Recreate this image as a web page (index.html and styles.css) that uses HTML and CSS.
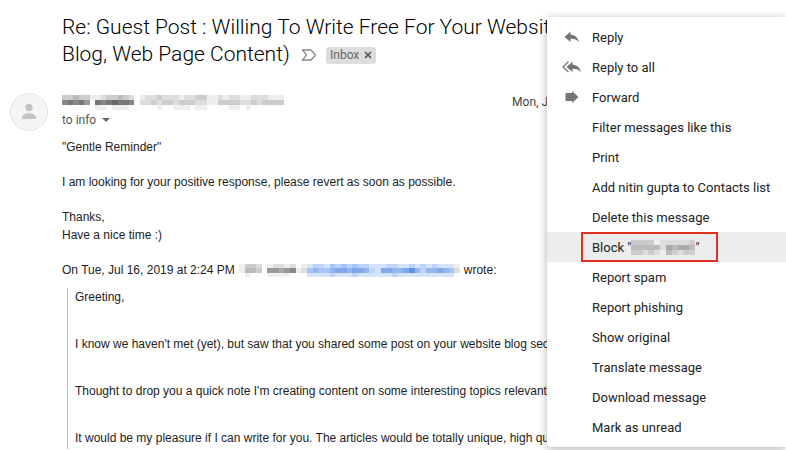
FILE: index.html
```
<!DOCTYPE html>
<html lang="en">
	<head>
		<meta charset="UTF-8">
		<title>Mail</title>
		<link rel="stylesheet" href="styles.css">
	</head>
	<body>
		<div class="mail">
			<div class="subject">
				<h1>Re: Guest Post : Willing To Write Free For Your Website<br>Blog, Web Page Content)</h1>
				<button class="important" type="button" aria-label="Important">
					<svg width="16" height="12" viewBox="0 0 16 12"><path d="M1.500 1H10l4.500 5-4.500 5H1.500l4-5z" fill="none" stroke="#8a8a8a" stroke-width="1.300"/></svg>
				</button>
				<button class="label" type="button">Inbox
					<svg width="8" height="8" viewBox="0 0 8 8"><path d="M1 1l6 6M7 1L1 7" stroke="#555" stroke-width="1.700"/></svg>
				</button>
			</div>
			<div class="message">
				<div class="avatar">
					<svg width="38" height="38" viewBox="0 0 38 38"><circle cx="19" cy="19" r="18.500" fill="#f5f5f5" stroke="#e2e2e2"/><circle cx="19" cy="14.500" r="3.700" fill="#c4c4c4"/><path d="M12 26v-1.800c0-2.500 4.500-3.900 7-3.900s7 1.400 7 3.900V26z" fill="#c4c4c4"/></svg>
				</div>
				<div class="content">
					<div class="from">
						<svg class="mosaic" data-mosaic="sender" width="228" height="15"></svg>
						<span class="date">Mon, J</span>
					</div>
					<button class="to" type="button">to info
						<svg width="8" height="4" viewBox="0 0 8 4"><path d="M0 0h8L4 4z" fill="#666"/></svg>
					</button>
					<div class="text">
						<p>"Gentle Reminder"</p>
						<p>I am looking for your positive response, please revert as soon as possible.</p>
						<p>Thanks,<br>Have a nice time :)</p>
						<p class="wrote">On Tue, Jul 16, 2019 at 2:24 PM <svg class="mosaic" data-mosaic="quoted" width="221" height="13"></svg> wrote:</p>
					</div>
					<blockquote>
						<p>Greeting,</p>
						<p>I know we haven't met (yet), but saw that you shared some post on your website blog section</p>
						<p>Thought to drop you a quick note I'm creating content on some interesting topics relevant</p>
						<p>It would be my pleasure if I can write for you. The articles would be totally unique, high qua</p>
					</blockquote>
				</div>
			</div>
		</div>
		<div class="menu">
			<button type="button"><span class="icon"><svg width="16" height="12" viewBox="0 0 16 12"><path d="M6.500 3.500V.500L.500 6l6 5V7.800c4 0 6.500 1 8.500 3.700-.700-4-3-7.300-8.500-8z" fill="#757575"/></svg></span>Reply</button>
			<button type="button"><span class="icon"><svg width="20" height="12" viewBox="0 0 20 12"><path d="M6.500.500L1 6l5.500 5" fill="none" stroke="#757575" stroke-width="1.300"/><path d="M10.500 3.500V.500L4.500 6l6 5V7.800c4 0 6.500 1 8.500 3.700-.700-4-3-7.300-8.500-8z" fill="#757575"/></svg></span>Reply to all</button>
			<button type="button"><span class="icon"><svg width="14" height="12" viewBox="0 0 14 12"><path d="M.500 2H7V0l6.500 6L7 12v-2H.500z" fill="#757575"/></svg></span>Forward</button>
			<button type="button"><span class="icon"></span>Filter messages like this</button>
			<button type="button"><span class="icon"></span>Print</button>
			<button type="button"><span class="icon"></span>Add nitin gupta to Contacts list</button>
			<button type="button"><span class="icon"></span>Delete this message</button>
			<button type="button" class="active"><span class="marked">Block "<svg class="mosaic" data-mosaic="blocked" width="64" height="15"></svg>"</span></button>
			<button type="button"><span class="icon"></span>Report spam</button>
			<button type="button"><span class="icon"></span>Report phishing</button>
			<button type="button"><span class="icon"></span>Show original</button>
			<button type="button"><span class="icon"></span>Translate message</button>
			<button type="button"><span class="icon"></span>Download message</button>
			<button type="button"><span class="icon"></span>Mark as unread</button>
		</div>
		<script src="mosaic.js"></script>
	</body>
</html>
```
FILE: styles.css
```
*{
	margin: 0;
	padding: 0;
	box-sizing: border-box;
}
body{
	background-color: #fff;
	color: #222;
	font-family: "Liberation Sans", Arial, sans-serif;
	font-size: 12px;
	line-height: 18px;
	overflow: hidden;
}
button{
	border: 0;
	background: none;
	color: #222;
	font-family: Roboto, sans-serif;
	text-align: left;
	cursor: pointer;
}
.mail{
	padding: 14px 10px 0;
}
/*标题*/
.subject{
	padding-left: 52px;
	color: #000;
	font-family: Roboto, sans-serif;
	font-size: 21px;
	font-weight: 300;
	line-height: 27px;
	white-space: nowrap;
}
.subject h1{
	display: inline;
	font-size: 21px;
	font-weight: 300;
}
.important{
	height: 16px;
	margin: 0 4px 0 6px;
	vertical-align: middle;
}
.important svg{
	display: block;
}
.label{
	display: inline-flex;
	align-items: center;
	gap: 5px;
	height: 17px;
	padding: 0 4px;
	border-radius: 3px;
	background-color: #ddd;
	color: #666;
	font-size: 12px;
	vertical-align: middle;
}
/*邮件内容*/
.message{
	display: flex;
	gap: 14px;
	margin-top: 25px;
}
.avatar{
	flex: none;
	width: 38px;
}
.content{
	flex: 1;
	min-width: 0;
	white-space: nowrap;
}
.from{
	display: flex;
	align-items: center;
	justify-content: space-between;
	height: 18px;
	padding-right: 228px;
}
.date{
	color: #444;
	font-family: Roboto, sans-serif;
	font-size: 12px;
}
.to{
	display: flex;
	align-items: center;
	gap: 6px;
	height: 18px;
	color: #555;
	font-size: 12px;
}
.text{
	display: flex;
	flex-direction: column;
	gap: 17px;
	margin-top: 9px;
}
.wrote{
	display: flex;
	align-items: center;
	gap: 4px;
}
blockquote{
	display: flex;
	flex-direction: column;
	gap: 29px;
	margin: 9px 0 0 5px;
	padding: 0 0 2px 7px;
	border-left: 1px solid #bbb;
}
/*菜单*/
.menu{
	position: absolute;
	top: 17px;
	right: 0;
	width: 239px;
	padding: 5px 0;
	border-radius: 4px 0 0 4px;
	background-color: #fff;
	box-shadow: 0 2px 10px rgba(0,0,0,.3);
}
.menu button{
	display: flex;
	align-items: center;
	gap: 8px;
	width: 100%;
	height: 30px;
	padding-left: 13px;
	font-size: 13px;
	white-space: nowrap;
}
.menu button:hover, .menu .active{
	background-color: #ededed;
}
.menu .active{
	padding-left: 34px;
}
.icon{
	display: flex;
	justify-content: center;
	width: 24px;
}
.marked{
	display: flex;
	align-items: center;
	height: 30px;
	padding: 0 16px 0 9px;
	border: 2px solid #e0301e;
	white-space: pre;
}
```
FILE: mosaic.js
```
//每个字符是一个色块，小写十六进制是灰色，大写字母是蓝色
var mosaics = {
	sender: [
		"ccbcceedccbcdfeddcdddeddcceededdeedddeeef",
		"87879f7876778fddcdccdcccddeeccccddcdccccf",
		"ffffffeefeeefffffeffeeefeeffffeefefffffff"
	],
	quoted: [
		"eccdfeddedfeTSSTRSRSRSSTTTSSTTSTSTSTTTe",
		"ebbcf99a98edRQRRQPPQPPQSTPPQQPOQSQQPQRd",
		"fefffeeeefffTTTTSTTTSTTTTTTSTTTTTTTTTTf"
	],
	blocked: [
		"ccccedddddc",
		"bbbbbdabaab",
		"ccdcdebcdcc"
	]
};
var blues = {
	O: "#5f92e0",
	P: "#82a8ec",
	Q: "#95b5ef",
	R: "#a8c4f5",
	S: "#bdd3f8",
	T: "#d5e3fb"
};
var list = document.getElementsByClassName("mosaic");
for(var i = 0;i < list.length;i++){
	var rows = mosaics[list[i].getAttribute("data-mosaic")];
	list[i].setAttribute("viewBox","0 0 " + rows[0].length + " 3");
	list[i].setAttribute("preserveAspectRatio","none");
	for(var y = 0;y < rows.length;y++){
		for(var x = 0;x < rows[y].length;x++){
			var c = rows[y][x];
			var rect = document.createElementNS("http://www.w3.org/2000/svg","rect");
			rect.setAttribute("x",x);
			rect.setAttribute("y",y);
			rect.setAttribute("width",1);
			rect.setAttribute("height",1);
			rect.setAttribute("shape-rendering","crispEdges");
			rect.setAttribute("fill",blues[c] || "#" + c + c + c);
			list[i].appendChild(rect);
		}
	}
}
```
